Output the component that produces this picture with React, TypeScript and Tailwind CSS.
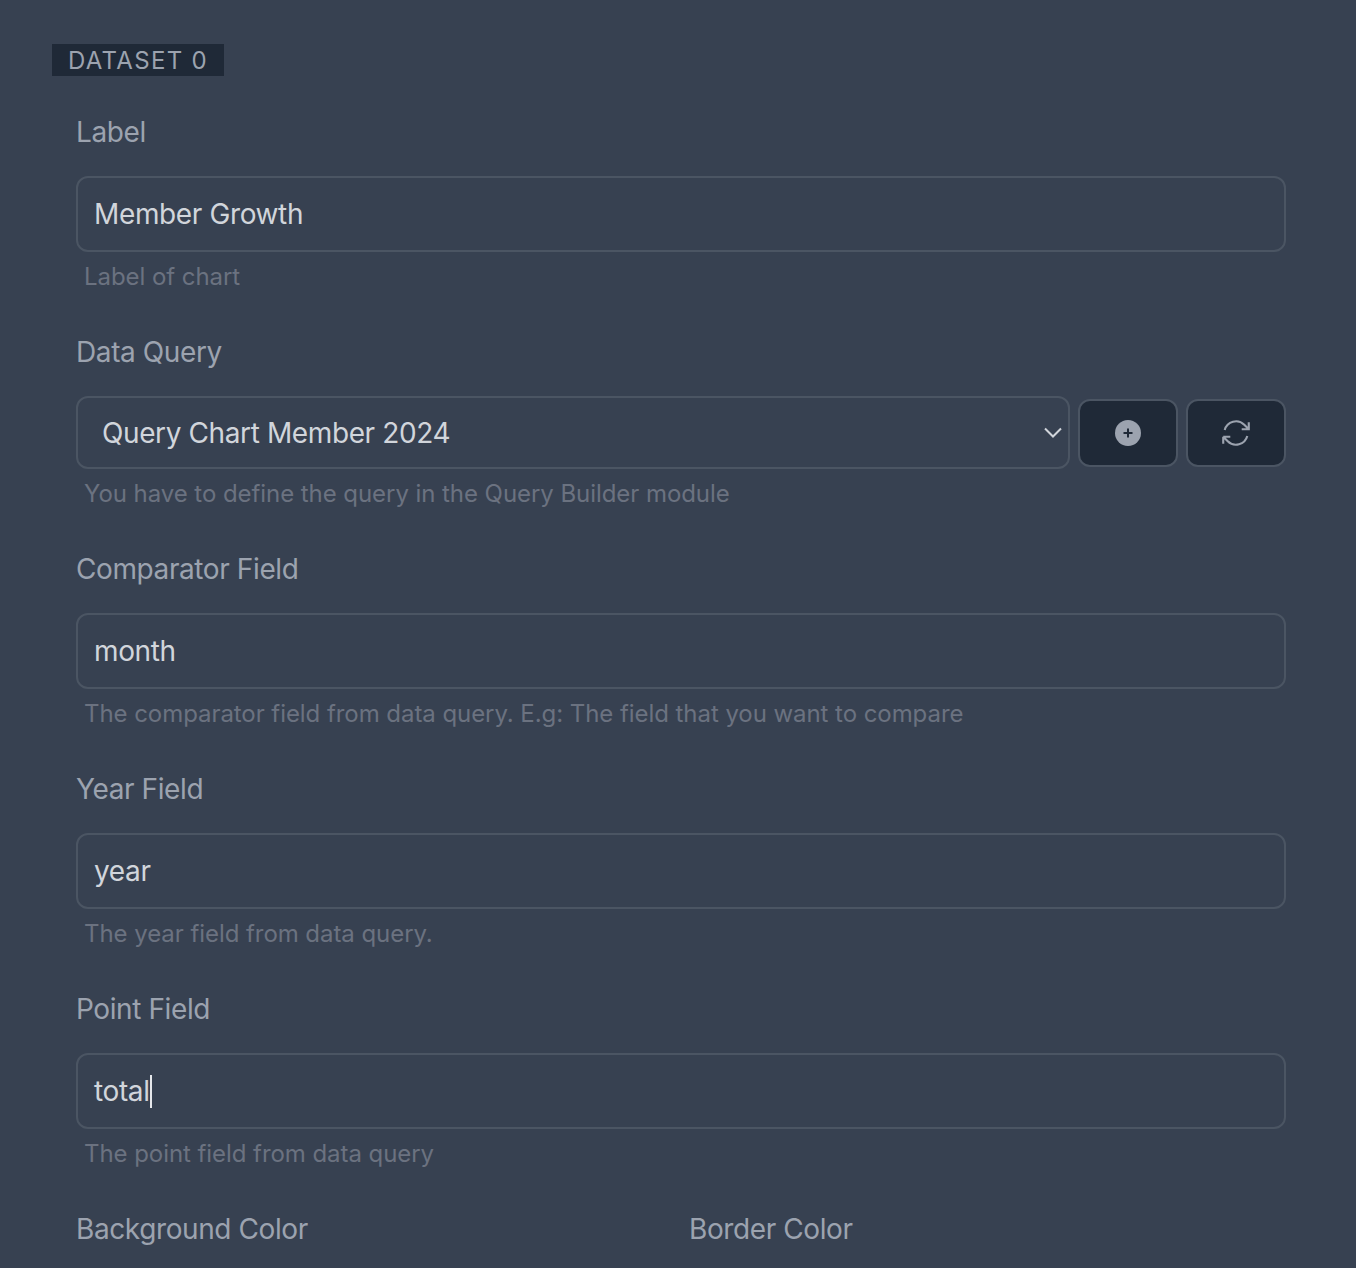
import React from 'react';

const font = { fontFamily: 'Inter, sans-serif' };

const FieldLabel = ({ children }: { children: React.ReactNode }) => (
  <label className="block h-[40px] text-[28px] leading-[40px] tracking-[-0.4px] text-[#9ca3af]">{children}</label>
);

const Help = ({ children }: { children: React.ReactNode }) => (
  <p className="mt-[9px] mb-[39px] pl-[8px] h-[32px] text-[24px] leading-[32px] tracking-[-0.06px] text-[#6b7280]">{children}</p>
);

const TextField = ({ label, value, help, caret }: { label: string; value: string; help: string; caret?: boolean }) => (
  <div>
    <FieldLabel>{label}</FieldLabel>
    <div className="mt-[24px] flex items-center h-[76px] rounded-[12px] border-2 border-[#4b5563] px-[16px] text-[28px] leading-[40px] tracking-[-0.37px] text-[#d1d5db]">
      <span>{value}</span>
      {caret && <span className="w-[2px] h-[33px] bg-[#e5e7eb]" />}
    </div>
    <Help>{help}</Help>
  </div>
);

export default function App() {
  return (
    <div className="h-[1268px] overflow-hidden bg-[#374151] pt-[44px] pl-[52px] pr-[70px]" style={font}>
      <div className="inline-block h-[32px] bg-[#1f2937] px-[16px] text-[24px] leading-[34px] tracking-[1.3px] text-[#9ca3af]">DATASET 0</div>
      <div className="mt-[36px] pl-[24px]">
        <TextField label="Label" value="Member Growth" help="Label of chart" />

        <div>
          <FieldLabel>Data Query</FieldLabel>
          <div className="mt-[24px] flex items-center gap-[8px]">
            <div className="flex-1 flex items-center justify-between h-[73px] rounded-[12px] border-2 border-[#4b5563] pl-[24px] pr-[6px] text-[28px] tracking-[-0.39px] text-[#d1d5db]">
              <span>Query Chart Member 2024</span>
              <svg width="18" height="11" viewBox="0 0 18 11" fill="none" stroke="#d1d5db" strokeWidth="2">
                <path d="M1 1.5l8 8 8-8" />
              </svg>
            </div>
            <button className="flex items-center justify-center w-[100px] h-[68px] rounded-[12px] border-2 border-[#4b5563] bg-[#1f2937]">
              <svg width="26" height="26" viewBox="0 0 26 26">
                <circle cx="13" cy="13" r="13" fill="#9ca3af" />
                <path d="M13 8.5v9M8.5 13h9" stroke="#1f2937" strokeWidth="2" />
              </svg>
            </button>
            <button className="flex items-center justify-center w-[100px] h-[68px] rounded-[12px] border-2 border-[#4b5563] bg-[#1f2937]">
              <svg width="34" height="34" viewBox="0 0 24 24" fill="none" stroke="#9ca3af" strokeWidth="1.5">
                <path d="M16.023 9.348h4.992v-.001M2.985 19.644v-4.992m0 0h4.992m-4.993 0 3.181 3.183a8.25 8.25 0 0 0 13.803-3.7M4.031 9.865a8.25 8.25 0 0 1 13.803-3.7l3.181 3.182m0-4.991v4.99" />
              </svg>
            </button>
          </div>
          <Help>You have to define the query in the Query Builder module</Help>
        </div>

        <TextField
          label="Comparator Field"
          value="month"
          help="The comparator field from data query. E.g: The field that you want to compare"
        />
        <TextField label="Year Field" value="year" help="The year field from data query." />
        <TextField label="Point Field" value="total" help="The point field from data query" caret />

        <div className="grid grid-cols-2 gap-[16px]">
          <FieldLabel>Background Color</FieldLabel>
          <FieldLabel>Border Color</FieldLabel>
        </div>
      </div>
    </div>
  );
}
